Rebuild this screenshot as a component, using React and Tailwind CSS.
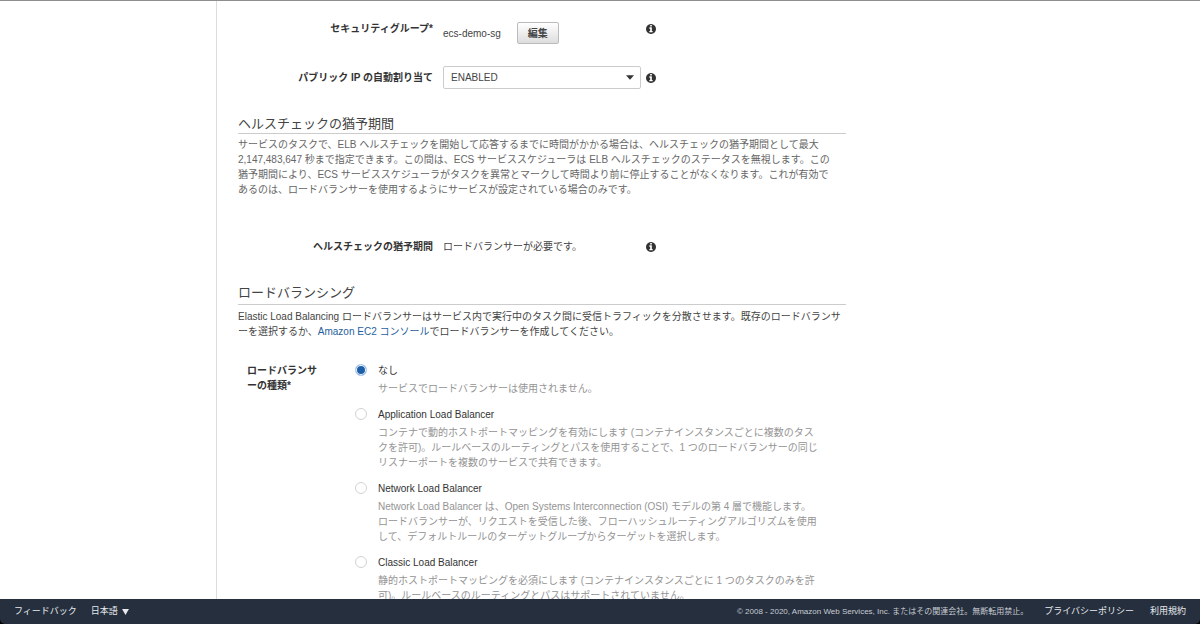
import { useState } from "react";

const balancers = [
  {
    id: "none",
    title: "なし",
    text: "サービスでロードバランサーは使用されません。",
  },
  {
    id: "alb",
    title: "Application Load Balancer",
    text: "コンテナで動的ホストポートマッピングを有効にします (コンテナインスタンスごとに複数のタスクを許可)。ルールベースのルーティングとパスを使用することで、1 つのロードバランサーの同じリスナーポートを複数のサービスで共有できます。",
  },
  {
    id: "nlb",
    title: "Network Load Balancer",
    text: "Network Load Balancer は、Open Systems Interconnection (OSI) モデルの第 4 層で機能します。ロードバランサーが、リクエストを受信した後、フローハッシュルーティングアルゴリズムを使用して、デフォルトルールのターゲットグループからターゲットを選択します。",
  },
  {
    id: "clb",
    title: "Classic Load Balancer",
    text: "静的ホストポートマッピングを必須にします (コンテナインスタンスごとに 1 つのタスクのみを許可)。ルールベースのルーティングとパスはサポートされていません。",
  },
];

function InfoButton({ label }) {
  return (
    <button type="button" aria-label={label} className="flex h-[15px] items-center text-[#333]">
      <svg viewBox="0 128 1536 1536" className="size-[10px] fill-current" aria-hidden="true">
        <path d="M1024 1376v-160q0-14-9-23t-23-9h-96v-512q0-14-9-23t-23-9h-320q-14 0-23 9t-9 23v160q0 14 9 23t23 9h96v320h-96q-14 0-23 9t-9 23v160q0 14 9 23t23 9h448q14 0 23-9t9-23zm-128-896v-160q0-14-9-23t-23-9h-192q-14 0-23 9t-9 23v160q0 14 9 23t23 9h192q14 0 23-9t9-23zm640 416q0 209-103 385.5t-279.5 279.5-385.5 103-385.5-103-279.5-279.5-103-385.5 103-385.5 279.5-279.5 385.5-103 385.5 103 279.5 279.5 103 385.5z" />
      </svg>
    </button>
  );
}

const row = "grid grid-cols-[205px_203px_10px] [&>*:first-child]:pr-[10px] [&>*:nth-child(2)]:mr-[5px]";

export default function App() {
  const [balancer, setBalancer] = useState("none");

  return (
    <div
      lang="ja"
      className="flex h-screen flex-col border-t border-[#8e8e8e] bg-white font-['Liberation_Sans','Noto_Sans_CJK_JP',sans-serif] text-[10px] leading-[15px] text-[#444]"
    >
      <div className="flex min-h-0 flex-1">
        <aside className="w-[217px] shrink-0 border-r border-[#ddd]" />
        <main className="min-w-0 flex-1 overflow-y-auto pl-[21px] [scrollbar-width:none]">
          <form className="max-w-[608px]" onSubmit={(e) => e.preventDefault()}>
            <div className={`${row} pt-[20px]`}>
              <span className="text-right font-bold text-[#333]">セキュリティグループ*</span>
              <div className="flex items-center gap-4 pt-px">
                <span>ecs-demo-sg</span>
                <button
                  type="button"
                  className="h-[22px] w-[42px] rounded-[2px] border border-[#bbb] bg-linear-to-b from-white to-[#ddd] text-[10px] leading-[15px] font-bold text-[#444]"
                >
                  編集
                </button>
              </div>
              <InfoButton label="セキュリティグループの情報" />
            </div>

            <div className={`${row} items-center pt-[22px]`}>
              <label htmlFor="public-ip" className="text-right font-bold text-[#333]">
                パブリック IP の自動割り当て
              </label>
              <div className="grid items-center">
                <select
                  id="public-ip"
                  defaultValue="ENABLED"
                  className="col-start-1 row-start-1 h-[23px] w-full appearance-none rounded-[2px] border border-[#ccc] bg-white px-[7px] text-[10px] text-[#444]"
                >
                  <option>ENABLED</option>
                  <option>DISABLED</option>
                </select>
                <svg
                  viewBox="0 0 8 5"
                  className="pointer-events-none col-start-1 row-start-1 mr-[7px] h-[5px] w-[8px] justify-self-end fill-[#333]"
                  aria-hidden="true"
                >
                  <path d="M0 0.3h8L4 4.8z" />
                </svg>
              </div>
              <InfoButton label="パブリック IP の情報" />
            </div>

            <section className="pt-[25px]">
              <h2 className="border-b border-[#ccc] text-[13px] leading-[19px]">ヘルスチェックの猶予期間</h2>
              <p className="max-w-[596px] pt-[3px] text-[#666]">
                サービスのタスクで、ELB ヘルスチェックを開始して応答するまでに時間がかかる場合は、ヘルスチェックの猶予期間として最大
                2,147,483,647 秒まで指定できます。この間は、ECS サービススケジューラは ELB
                ヘルスチェックのステータスを無視します。この猶予期間により、ECS
                サービススケジューラがタスクを異常とマークして時間より前に停止することがなくなります。これが有効であるのは、ロードバランサーを使用するようにサービスが設定されている場合のみです。
              </p>
              <div className={`${row} pt-[42px]`}>
                <span className="text-right font-bold text-[#333]">ヘルスチェックの猶予期間</span>
                <span>ロードバランサーが必要です。</span>
                <InfoButton label="ヘルスチェックの猶予期間の情報" />
              </div>
            </section>

            <section className="pt-[29px]">
              <h2 className="border-b border-[#ccc] pb-[2px] text-[13px] leading-[19px]">ロードバランシング</h2>
              <p className="pt-[4px]">
                Elastic Load Balancing
                ロードバランサーはサービス内で実行中のタスク間に受信トラフィックを分散させます。既存のロードバランサーを選択するか、
                <a href="#ec2" className="text-[#1f5f9e]">
                  Amazon EC2 コンソール
                </a>
                でロードバランサーを作成してください。
              </p>

              <div
                role="radiogroup"
                aria-labelledby="balancer-kind"
                className="flex gap-[37px] pt-[24px] pl-[9px]"
              >
                <span id="balancer-kind" className="w-[71px] shrink-0 font-bold text-[#333]">
                  ロードバランサーの種類*
                </span>
                <div className="flex flex-col gap-[11px]">
                  {balancers.map((b) => (
                    <div key={b.id} className="flex gap-[11px]">
                      <input
                        type="radio"
                        id={b.id}
                        name="balancer"
                        checked={balancer === b.id}
                        onChange={() => setBalancer(b.id)}
                        aria-describedby={`${b.id}-text`}
                        className="mt-px size-[12px] shrink-0 appearance-none rounded-full border border-[#d2d2d2] bg-white checked:border-[#b5d3f5] checked:bg-[#1d5fa8] checked:shadow-[inset_0_0_0_1px_white]"
                      />
                      <div className="w-[441px]">
                        <label htmlFor={b.id} className="block text-[#333]">
                          {b.title}
                        </label>
                        <p id={`${b.id}-text`} className="pt-[3px] text-[#949494]">
                          {b.text}
                        </p>
                      </div>
                    </div>
                  ))}
                </div>
              </div>
            </section>
          </form>
        </main>
      </div>

      <footer className="shrink-0 bg-black">
        <div className="flex h-[25px] items-center justify-between rounded-b-[5px] bg-[#252f3e] px-[14px] text-[9px] text-[#e8eaed]">
          <div className="flex gap-[14px]">
            <a href="#feedback">フィードバック</a>
            <button type="button" className="flex items-center gap-[4px]">
              日本語
              <svg viewBox="0 0 8 7" className="h-[6px] w-[7px] fill-current" aria-hidden="true">
                <path d="M0 0h8L4 7z" />
              </svg>
            </button>
          </div>
          <div className="flex items-center gap-[16px]">
            <small className="text-[8px] text-[#c8ccd2]">
              © 2008 - 2020, Amazon Web Services, Inc. またはその関連会社。無断転用禁止。
            </small>
            <a href="#privacy">プライバシーポリシー</a>
            <a href="#terms">利用規約</a>
          </div>
        </div>
      </footer>
    </div>
  );
}
